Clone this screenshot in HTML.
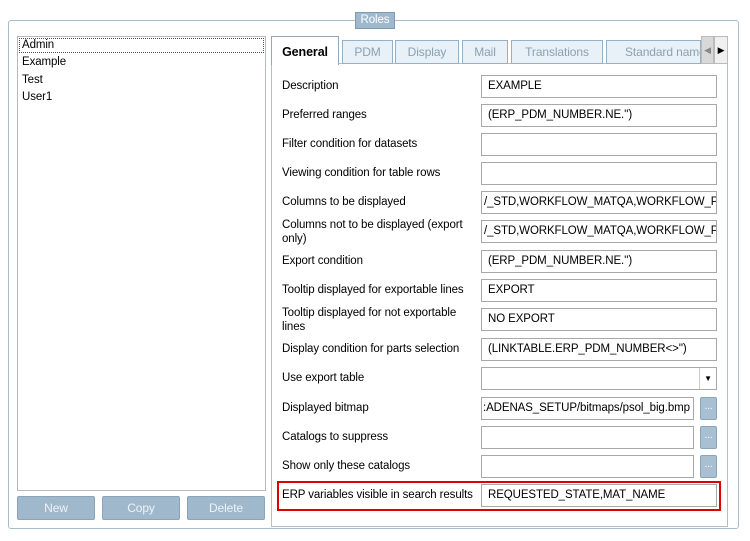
<!DOCTYPE html>
<html><head><style>
body{margin:0;width:750px;height:541px;background:#fff;font-family:"Liberation Sans",sans-serif;font-size:11.5px;color:#000;position:relative;overflow:hidden;letter-spacing:-0.1px}
.a{position:absolute;box-sizing:border-box}
.frame{left:8px;top:20px;width:731px;height:509px;border:1px solid #a9bccb;border-radius:3px}
.legend{left:355px;top:12px;width:40px;height:17px;background:#9fb8cc;border:1px solid #7f9bb3;color:#fff;text-align:center;line-height:15px}
.list{left:17px;top:36px;width:249px;height:455px;border:1px solid #b9b9b9}
.li{position:absolute;left:4px}
.btn{top:496px;height:24px;width:78px;background:#9fb8cc;border:1px solid #8aa5bb;border-radius:2px;color:#eef3f7;text-align:center;line-height:22px;font-size:12px}
.tab{top:40px;height:24px;background:#e8f1f8;border:1px solid #98b0c4;color:#8aa0b2;text-align:center;line-height:23px;font-size:12px}
.panel{left:271px;top:63px;width:457px;height:464px;border:1px solid #b0bfcc;border-top:none}
.lbl{left:282px;line-height:14px;width:195px;white-space:nowrap}
.w{white-space:normal}
.in{left:481px;width:236px;height:23px;border:1px solid #a8a8a8;padding-left:6px;line-height:21px;white-space:nowrap;overflow:hidden}
.dot{left:700px;width:17px;height:23px;background:#a9c0d3;border:1px solid #8aa5bb;border-radius:2px;color:#fff;text-align:center;line-height:18px;font-size:10px}
</style></head><body>
<div class="a frame"></div>
<div class="a legend">Roles</div>
<div class="a list">
<div class="li" style="top:1px;left:1px;width:245px;height:15px;border:1px dotted #555;padding-left:2px;box-sizing:border-box;line-height:13px">Admin</div>
<div class="li" style="top:19px">Example</div>
<div class="li" style="top:37px">Test</div>
<div class="li" style="top:54px">User1</div>
</div>
<div class="a btn" style="left:17px">New</div>
<div class="a btn" style="left:102px">Copy</div>
<div class="a btn" style="left:187px">Delete</div>
<div class="a panel"></div>
<div class="a" style="left:271px;top:63px;width:457px;border-top:1px solid #b0bfcc"></div>
<div class="a" style="left:271px;top:36px;width:68px;height:29px;background:#fff;border:1px solid #98a8b6;border-bottom:none;font-weight:bold;text-align:center;line-height:30px;font-size:12.5px">General</div>
<div class="a tab" style="left:342px;width:51px">PDM</div>
<div class="a tab" style="left:395px;width:64px">Display</div>
<div class="a tab" style="left:462px;width:46px">Mail</div>
<div class="a tab" style="left:511px;width:92px">Translations</div>
<div class="a tab" style="left:606px;width:95px;text-align:left;padding-left:18px;overflow:hidden;white-space:nowrap">Standard name</div>
<div class="a" style="left:701px;top:36px;width:13px;height:28px;background:#d8d8d8;border:1px solid #bbb;color:#888;font-size:9px;text-align:center;line-height:26px">◀</div>
<div class="a" style="left:714px;top:36px;width:14px;height:28px;background:#f0f0f0;border:1px solid #bbb;font-size:9px;text-align:center;line-height:26px">▶</div>

<div class="a lbl" style="top:79px">Description</div><div class="a in" style="top:75px">EXAMPLE</div>
<div class="a lbl" style="top:108px">Preferred ranges</div><div class="a in" style="top:104px">(ERP_PDM_NUMBER.NE.'')</div>
<div class="a lbl" style="top:137px">Filter condition for datasets</div><div class="a in" style="top:133px"></div>
<div class="a lbl" style="top:166px">Viewing condition for table rows</div><div class="a in" style="top:162px"></div>
<div class="a lbl" style="top:195px">Columns to be displayed</div><div class="a in" style="top:191px;padding-left:2px">/_STD,WORKFLOW_MATQA,WORKFLOW_PD</div>
<div class="a lbl w" style="top:218px">Columns not to be displayed (export only)</div><div class="a in" style="top:220px;padding-left:2px">/_STD,WORKFLOW_MATQA,WORKFLOW_PD</div>
<div class="a lbl" style="top:254px">Export condition</div><div class="a in" style="top:250px">(ERP_PDM_NUMBER.NE.'')</div>
<div class="a lbl" style="top:283px">Tooltip displayed for exportable lines</div><div class="a in" style="top:279px">EXPORT</div>
<div class="a lbl w" style="top:306px">Tooltip displayed for not exportable lines</div><div class="a in" style="top:308px">NO EXPORT</div>
<div class="a lbl" style="top:342px">Display condition for parts selection</div><div class="a in" style="top:338px">(LINKTABLE.ERP_PDM_NUMBER&lt;&gt;'')</div>
<div class="a lbl" style="top:371px">Use export table</div><div class="a in" style="top:367px"></div>
<div class="a" style="left:699px;top:368px;width:17px;height:21px;border-left:1px solid #ccc;font-size:8px;text-align:center;line-height:21px">▼</div>
<div class="a lbl" style="top:401px">Displayed bitmap</div><div class="a in" style="top:397px;width:213px;padding-left:1px">:ADENAS_SETUP/bitmaps/psol_big.bmp</div><div class="a dot" style="top:397px">...</div>
<div class="a lbl" style="top:430px">Catalogs to suppress</div><div class="a in" style="top:426px;width:213px"></div><div class="a dot" style="top:426px">...</div>
<div class="a lbl" style="top:459px">Show only these catalogs</div><div class="a in" style="top:455px;width:213px"></div><div class="a dot" style="top:455px">...</div>
<div class="a lbl" style="top:488px">ERP variables visible in search results</div><div class="a in" style="top:484px">REQUESTED_STATE,MAT_NAME</div>
<div class="a" style="left:277px;top:481px;width:444px;height:30px;border:2px solid #e00000"></div>
</body></html>
